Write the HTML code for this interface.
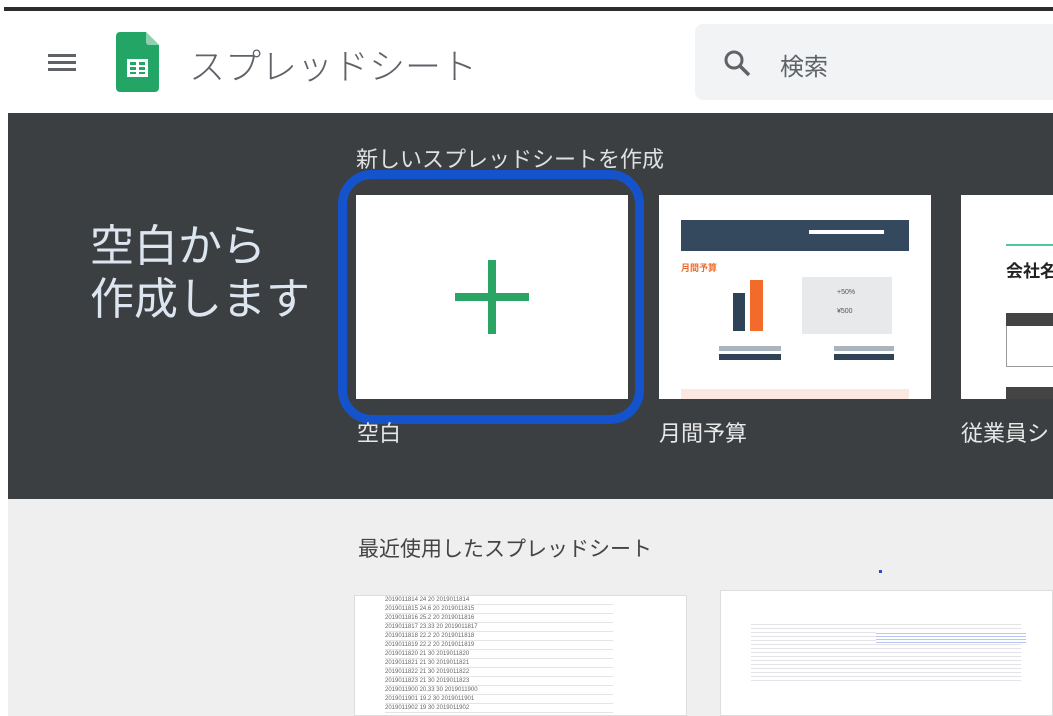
<!DOCTYPE html>
<html><head><meta charset="utf-8"><style>
*{margin:0;padding:0;box-sizing:border-box}
body{width:1053px;height:716px;overflow:hidden;background:#fff;position:relative;font-family:"Liberation Sans","Noto Sans CJK JP",sans-serif}
.a{position:absolute}
.line{left:4px;top:7px;width:1049px;height:4px;background:#2d2d2d}
.band{left:8px;top:113px;width:1045px;height:386px;background:#3b3f41}
.gray{left:8px;top:499px;width:1045px;height:217px;background:#efefef}
.card{background:#fff}
.t{white-space:nowrap}
</style></head><body>
<div class="a line"></div>
<!-- header -->
<div class="a" style="left:48px;top:54px;width:28px;height:3px;background:#5f6368"></div>
<div class="a" style="left:48px;top:61px;width:28px;height:3px;background:#5f6368"></div>
<div class="a" style="left:48px;top:68px;width:28px;height:3px;background:#5f6368"></div>
<svg class="a" style="left:116px;top:32px" width="44" height="60" viewBox="0 0 44 60">
<path d="M4 0H30L43 13V56a4 4 0 0 1-4 4H4a4 4 0 0 1-4-4V4a4 4 0 0 1 4-4z" fill="#23a566"/>
<path d="M30 0L43 13H33a3 3 0 0 1-3-3z" fill="#8ed1b1"/>
<rect x="11" y="27" width="21" height="18" fill="#fff"/>
<rect x="14" y="30" width="6" height="3" fill="#23a566"/><rect x="23" y="30" width="6" height="3" fill="#23a566"/>
<rect x="14" y="35" width="6" height="3" fill="#23a566"/><rect x="23" y="35" width="6" height="3" fill="#23a566"/>
<rect x="14" y="40" width="6" height="2" fill="#23a566"/><rect x="23" y="40" width="6" height="2" fill="#23a566"/>
</svg>
<div class="a t" style="left:189px;top:38px;font-size:36px;color:#5f6368;font-weight:300">スプレッドシート</div>
<div class="a" style="left:695px;top:24px;width:370px;height:76px;background:#f1f3f4;border-radius:8px"></div>
<svg class="a" style="left:722px;top:48px" width="30" height="30" viewBox="0 0 30 30"><circle cx="12" cy="12" r="8" fill="none" stroke="#5f6368" stroke-width="3"/><path d="M18 18L27 27" stroke="#5f6368" stroke-width="3.5"/></svg>
<div class="a t" style="left:780px;top:47px;font-size:24px;color:#5f6368">検索</div>
<!-- band -->
<div class="a band"></div>
<div class="a t" style="left:356px;top:142px;font-size:22px;color:#e0e0e0">新しいスプレッドシートを作成</div>
<div class="a t" style="left:90px;top:220px;font-size:44px;line-height:53px;color:#dde6f0">空白から<br>作成します</div>
<div class="a card" style="left:356px;top:195px;width:272px;height:204px"></div>
<div class="a" style="left:455px;top:293px;width:74px;height:8px;background:#2aa564"></div>
<div class="a" style="left:488px;top:260px;width:8px;height:74px;background:#2aa564"></div>
<div class="a" style="left:338px;top:170px;width:306px;height:254px;border:9px solid #1553cc;border-radius:34px"></div>
<div class="a t" style="left:357px;top:416px;font-size:22px;color:#e8e8e8">空白</div>
<!-- template 2 -->
<div class="a card" style="left:659px;top:195px;width:272px;height:204px">
 <div class="a" style="left:22px;top:25px;width:228px;height:31px;background:#34495e"></div>
 <div class="a" style="left:150px;top:35px;width:75px;height:4px;background:#fff"></div>
 <div class="a t" style="left:22px;top:66px;font-size:9px;font-weight:bold;color:#ee6a2c">月間予算</div>
 <div class="a" style="left:74px;top:98px;width:12px;height:38px;background:#2f4358"></div>
 <div class="a" style="left:91px;top:85px;width:13px;height:51px;background:#f26b2a"></div>
 <div class="a" style="left:143px;top:82px;width:90px;height:57px;background:#e8e9ea"></div>
 <div class="a t" style="left:178px;top:94px;font-size:7px;color:#555">+50%</div>
 <div class="a t" style="left:178px;top:113px;font-size:7px;color:#555">¥500</div>
 <div class="a" style="left:60px;top:151px;width:62px;height:5px;background:#aab4bd"></div>
 <div class="a" style="left:60px;top:159px;width:62px;height:6px;background:#2f4358"></div>
 <div class="a" style="left:175px;top:151px;width:60px;height:5px;background:#aab4bd"></div>
 <div class="a" style="left:175px;top:159px;width:60px;height:6px;background:#2f4358"></div>
 <div class="a" style="left:22px;top:194px;width:228px;height:10px;background:#fbe9e1"></div>
</div>
<div class="a t" style="left:659px;top:416px;font-size:22px;color:#e8e8e8">月間予算</div>
<!-- template 3 -->
<div class="a card" style="left:961px;top:195px;width:92px;height:204px;overflow:hidden">
 <div class="a" style="left:45px;top:49px;width:60px;height:2px;background:#4cc9a0"></div>
 <div class="a t" style="left:45px;top:62px;font-size:17px;font-weight:bold;color:#222">会社名</div>
 <div class="a" style="left:45px;top:118px;width:60px;height:54px;border:1px solid #999"></div>
 <div class="a" style="left:45px;top:118px;width:60px;height:13px;background:#444"></div>
 <div class="a" style="left:45px;top:192px;width:60px;height:12px;background:#444"></div>
</div>
<div class="a t" style="left:961px;top:416px;font-size:22px;color:#e8e8e8">従業員シ</div>
<!-- recent -->
<div class="a gray"></div>
<div class="a t" style="left:358px;top:533px;font-size:21px;color:#444">最近使用したスプレッドシート</div>
<div class="a" style="left:879px;top:570px;width:3px;height:3px;background:#3344cc"></div>
<div class="a card" style="left:354px;top:595px;width:333px;height:121px;border:1px solid #ddd;overflow:hidden">
<div style="position:absolute;left:30px;top:0;width:172px;font-size:6px;color:#666;line-height:9px">
2019011814 24 20 2019011814<br>2019011815 24.6 20 2019011815<br>2019011816 25.2 20 2019011816<br>2019011817 23.33 20 2019011817<br>2019011818 22.2 20 2019011818<br>2019011819 22.2 20 2019011819<br>2019011820 21 30 2019011820<br>2019011821 21 30 2019011821<br>2019011822 21 30 2019011822<br>2019011823 21 30 2019011823<br>2019011900 20.33 30 2019011900<br>2019011901 19.2 30 2019011901<br>2019011902 19 30 2019011902</div>
<div style="position:absolute;left:30px;top:0;width:228px;height:121px;background:repeating-linear-gradient(#fff0 0 8px,#e4e4e4 8px 9px)"></div>
</div>
<div class="a card" style="left:720px;top:590px;width:333px;height:126px;border:1px solid #ddd">
 <div class="a" style="left:30px;top:30px;width:270px;height:60px;background:repeating-linear-gradient(#fff 0 3px,#e4e4e8 3px 4px)"></div>
 <div class="a" style="left:155px;top:40px;width:150px;height:12px;background:repeating-linear-gradient(#fff 0 2px,#b8c8ee 2px 3px)"></div>
</div>
</body></html>
